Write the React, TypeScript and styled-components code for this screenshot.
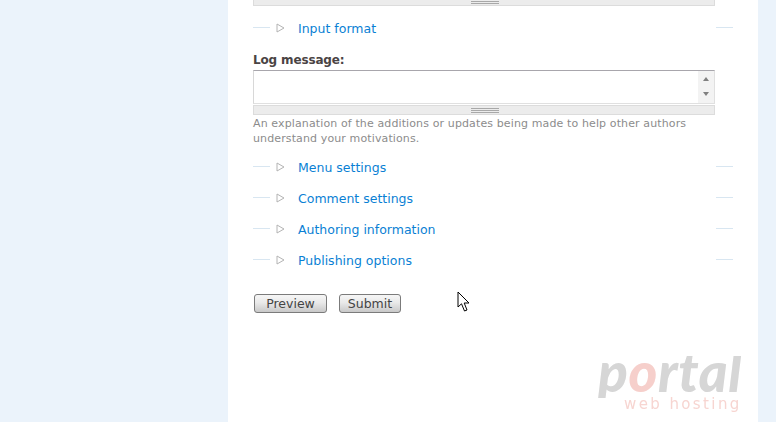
import React from "react";
import styled, { createGlobalStyle } from "styled-components";

const Global = createGlobalStyle`
  html, body { margin: 0; padding: 0; background: #fff; }
  body { font-family: "DejaVu Sans", Verdana, sans-serif; overflow: hidden; }
`;
const Page = styled.div`
  position: relative;
  display: grid;
  grid-template-columns: 228px 530px 18px;
  width: 776px;
  height: 422px;
  overflow: hidden;
`;
const Side = styled.div`
  background: #ebf3fb;
`;
const Main = styled.main`
  background: #fff;
  padding: 0 0 0 25px;
  display: flex;
  flex-direction: column;
  align-items: flex-start;
`;
const Grippie = styled.div<{ $h: number }>`
  box-sizing: border-box;
  width: 462px;
  height: ${(p) => p.$h}px;
  background: #ececec;
  border: 1px solid #dcdcdc;
  border-top: ${(p) => (p.$h > 6 ? "1px solid #dcdcdc" : "0")};
  display: flex;
  justify-content: center;
  align-items: ${(p) => (p.$h > 6 ? "center" : "flex-end")};
  padding-bottom: ${(p) => (p.$h > 6 ? "0" : "1px")};
`;
const GripMark = styled.div<{ $h: number }>`
  width: 28px;
  height: ${(p) => p.$h}px;
  margin-left: 1px;
  background: repeating-linear-gradient(to bottom, #a8a8a8 0 1px, #ececec 1px 2px);
`;
const Row = styled.div`
  display: flex;
  align-items: center;
  width: 480px;
  height: 31px;
  flex: none;
`;
const Line = styled.span`
  width: 17px;
  height: 1px;
  background: #d8e6f1;
  margin-top: -2px;
  flex: none;
`;
const Arrow = styled.svg`
  width: 9px;
  height: 10px;
  margin: -2px 0 0 6px;
  flex: none;
`;
const Link = styled.a`
  color: #0a7fd4;
  font-size: 12.5px;
  margin-left: 13px;
  flex: 1;
  line-height: 16px;
  text-decoration: none;
`;
const Label = styled.label`
  display: block;
  margin-top: 9px;
  height: 15px;
  font-size: 12px;
  line-height: 15px;
  letter-spacing: -0.15px;
  font-weight: 700;
  color: #4a4444;
`;
const Area = styled.div`
  box-sizing: border-box;
  width: 462px;
  height: 34px;
  margin: 2px 0 1px;
  border: 1px solid #e0e0e0;
  border-top-color: #a8a6ac;
  border-left-color: #d8d8d8;
  display: flex;
  justify-content: flex-end;
  background: #fff;
`;
const Scroll = styled.div`
  width: 16px;
  background: #f3f3f3;
  display: flex;
  flex-direction: column;
  justify-content: space-between;
  align-items: center;
  padding: 6px 0 7px;
  box-sizing: border-box;
`;
const Tip = styled.span<{ $up?: boolean }>`
  width: 0;
  height: 0;
  border-left: 3.5px solid transparent;
  border-right: 3.5px solid transparent;
  ${(p) => (p.$up ? "border-bottom: 4px solid #808080;" : "border-top: 4px solid #808080;")}
`;
const Help = styled.p`
  width: 462px;
  margin: 0;
  padding-top: 1px;
  height: 29px;
  font-size: 11px;
  line-height: 15px;
  letter-spacing: 0.12px;
  color: #8c8c8c;
`;
const Rows = styled.div`
  margin-top: 7px;
  display: flex;
  flex-direction: column;
`;
const Buttons = styled.div`
  display: flex;
  gap: 12px;
  margin: 18px 0 0 1px;
`;
const Button = styled.button<{ $w: number }>`
  box-sizing: border-box;
  width: ${(p) => p.$w}px;
  height: 19px;
  padding: 0;
  border: 1px solid #7b7b7b;
  border-radius: 3px;
  background: linear-gradient(to bottom, #f6f6f6 0%, #e9e9e9 45%, #c8c8c8 100%);
  font-family: inherit;
  font-size: 12.5px;
  line-height: 16px;
  color: #444;
`;
const Cursor = styled.svg`
  position: absolute;
  left: 457px;
  top: 291px;
  width: 14px;
  height: 22px;
`;
const Logo = styled.div`
  position: absolute;
  left: 598px;
  top: 349px;
  width: 146px;
  filter: blur(0.6px);
  user-select: none;
`;
const LogoMain = styled.div`
  font-family: Lato, sans-serif;
  font-weight: 900;
  font-style: italic;
  font-size: 55px;
  line-height: 44px;
  letter-spacing: 0.6px;
  color: #d6d6d6;
  clip-path: inset(7px -12px -5px -12px);
  span { color: #f6cfcb; }
`;
const LogoSub = styled.div`
  margin: 3px 0 0 26px;
  font-family: "DejaVu Sans", sans-serif;
  font-size: 15px;
  line-height: 16px;
  letter-spacing: 2.4px;
  color: #f7d5d1;
  white-space: nowrap;
`;

const Fieldset = ({ title }: { title: string }) => (
  <Row>
    <Line />
    <Arrow viewBox="0 0 9 10">
      <path d="M1 1 L8 5 L1 9 Z" fill="#fff" stroke="#b4b4b4" strokeWidth="1" />
    </Arrow>
    <Link>{title}</Link>
    <Line />
  </Row>
);

export default function App() {
  return (
    <>
      <Global />
      <Page>
        <Side />
        <Main>
          <Grippie $h={6}>
            <GripMark $h={3} />
          </Grippie>
          <Rows>
            <Fieldset title="Input format" />
          </Rows>
          <Label>Log message:</Label>
          <Area>
            <Scroll>
              <Tip $up />
              <Tip />
            </Scroll>
          </Area>
          <Grippie $h={10}>
            <GripMark $h={5} />
          </Grippie>
          <Help>
            An explanation of the additions or updates being made to help other authors understand your motivations.
          </Help>
          <Rows>
            <Fieldset title="Menu settings" />
            <Fieldset title="Comment settings" />
            <Fieldset title="Authoring information" />
            <Fieldset title="Publishing options" />
          </Rows>
          <Buttons>
            <Button $w={73}>Preview</Button>
            <Button $w={62}>Submit</Button>
          </Buttons>
        </Main>
        <Side />
        <Logo>
          <LogoMain>
            p<span>o</span>rtal
          </LogoMain>
          <LogoSub>web hosting</LogoSub>
        </Logo>
        <Cursor viewBox="0 0 14 22">
          <path d="M1 1 L1 16 L4.5 12.8 L7.5 20 L10 19 L7.2 12 L12 12 Z" fill="#fff" stroke="#000" strokeWidth="1" />
        </Cursor>
      </Page>
    </>
  );
}
